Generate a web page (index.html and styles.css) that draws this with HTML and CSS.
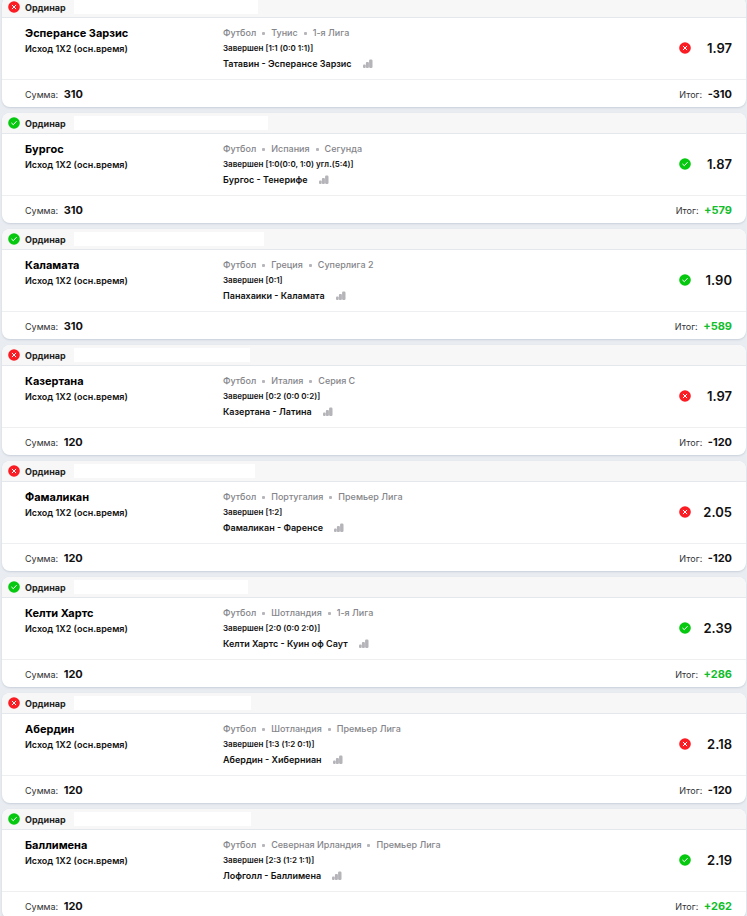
FILE: index.html
```
<!DOCTYPE html>
<html lang="ru">
<head>
  <meta charset="UTF-8">
  <meta name="viewport" content="width=device-width, initial-scale=1.0">
  <title>История ставок</title>
  <link rel="stylesheet" href="styles.css">
</head>
<body>
  <main class="bets" id="bets"></main>

  <script src="bets.js"></script>
</body>
</html>
```

FILE: styles.css
```
* {
  box-sizing: border-box;
}
body {
  font-family: Inter, "Liberation Sans", sans-serif;
  background-color: #e9edf2;
  color: #111;
  margin: 0;
  overflow-x: hidden;
}
/* the list is scrolled a little under the top edge */
.bets {
  display: flex;
  flex-direction: column;
  gap: 6px;
  margin-top: -3px;
  padding: 0 1px 0 2px;
}
.bet {
  background-color: #fff;
  border-radius: 8px;
  overflow: hidden;
  box-shadow: 0 1px 2px #c9d0da;
}
.bet-header {
  display: flex;
  align-items: center;
  height: 21px;
  padding-left: 6px;
  background-color: #f7f7f7;
  border-bottom: 1px solid #e4e7eb;
}
.bet-type {
  width: 49px;
  margin: 0 0 0 5px;
  font-size: 9px;
  font-weight: 700;
  color: #222;
}
.bet-date {
  height: 14px;
  background-color: #fff;
}
.icon {
  display: block;
  width: 12px;
  height: 12px;
}
.icon.lost {
  color: #fb1b22;
}
.icon.won {
  color: #06c90f;
}
.bet-body {
  display: flex;
  height: 62px;
  padding: 7px 14px 0 23px;
  border-bottom: 1px solid #edeff1;
}
.pick {
  width: 198px;
}
.pick h2 {
  margin: 0;
  font-size: 11px;
  line-height: 16px;
  font-weight: 700;
  color: #000;
}
.pick p,
.match p {
  margin: 0;
  font-size: 9px;
  line-height: 15px;
  font-weight: 600;
  white-space: nowrap;
}
.match {
  flex: 1;
}
.match .league {
  display: flex;
  align-items: center;
  gap: 6px;
  line-height: 16px;
  font-weight: 500;
  color: #85858a;
}
.dot {
  width: 3px;
  height: 3px;
  border-radius: 1px;
  background-color: #b5b5ba;
}
.match .status {
  font-size: 8px;
}
.match .teams {
  display: flex;
  align-items: center;
  gap: 11px;
}
.stats {
  padding: 0;
  border: none;
  background: none;
  color: #b4b4b9;
  cursor: pointer;
}
.stats svg {
  display: block;
  width: 10px;
  height: 9px;
}
.odds {
  display: flex;
  align-items: center;
  justify-content: space-between;
  width: 53px;
  height: 46px;
  font-size: 13px;
  font-weight: 600;
}
.bet-footer {
  display: flex;
  justify-content: space-between;
  align-items: center;
  height: 27px;
  padding: 0 14px 0 23px;
  font-size: 9px;
  color: #333;
}
.bet-footer strong {
  margin-left: 3px;
  font-size: 11px;
  font-weight: 700;
  color: #111;
}
.bet-footer .plus {
  color: #12bd2b;
}
```

FILE: bets.js
```
var bets = [
  { won: false, date: 184, pick: "Эсперансе Зарзис", league: ["Футбол", "Тунис", "1-я Лига"], score: "[1:1 (0:0 1:1)]", teams: "Татавин - Эсперансе Зарзис", odds: "1.97", sum: 310, total: "-310" },
  { won: true, date: 194, pick: "Бургос", league: ["Футбол", "Испания", "Сегунда"], score: "[1:0(0:0, 1:0) угл.(5:4)]", teams: "Бургос - Тенерифе", odds: "1.87", sum: 310, total: "+579" },
  { won: true, date: 190, pick: "Каламата", league: ["Футбол", "Греция", "Суперлига 2"], score: "[0:1]", teams: "Панахаики - Каламата", odds: "1.90", sum: 310, total: "+589" },
  { won: false, date: 176, pick: "Казертана", league: ["Футбол", "Италия", "Серия С"], score: "[0:2 (0:0 0:2)]", teams: "Казертана - Латина", odds: "1.97", sum: 120, total: "-120" },
  { won: false, date: 181, pick: "Фамаликан", league: ["Футбол", "Португалия", "Премьер Лига"], score: "[1:2]", teams: "Фамаликан - Фаренсе", odds: "2.05", sum: 120, total: "-120" },
  { won: true, date: 174, pick: "Келти Хартс", league: ["Футбол", "Шотландия", "1-я Лига"], score: "[2:0 (0:0 2:0)]", teams: "Келти Хартс - Куин оф Саут", odds: "2.39", sum: 120, total: "+286" },
  { won: false, date: 177, pick: "Абердин", league: ["Футбол", "Шотландия", "Премьер Лига"], score: "[1:3 (1:2 0:1)]", teams: "Абердин - Хиберниан", odds: "2.18", sum: 120, total: "-120" },
  { won: true, date: 177, pick: "Баллимена", league: ["Футбол", "Северная Ирландия", "Премьер Лига"], score: "[2:3 (1:2 1:1)]", teams: "Лофголл - Баллимена", odds: "2.19", sum: 120, total: "+262" }
];

function statusIcon(won) {
  var mark = won ? "M3.7 6.2L5.3 7.7L8.3 4.5" : "M4.2 4.2L7.8 7.8M7.8 4.2L4.2 7.8";
  return '<svg class="icon ' + (won ? "won" : "lost") + '" viewBox="0 0 12 12">' +
    '<circle cx="6" cy="6" r="5.8" fill="currentColor"/>' +
    '<path d="' + mark + '" fill="none" stroke="#fff" stroke-width="1" stroke-linecap="round"/></svg>';
}

var statsIcon = '<svg viewBox="0 0 10 9" fill="currentColor">' +
  '<rect x="0" y="5.5" width="2.7" height="3.5" rx="1"/>' +
  '<rect x="2.9" y="3" width="3" height="6" rx="1"/>' +
  '<rect x="6.1" y="0.5" width="3.4" height="8.5" rx="1.2"/></svg>';

function renderBet(bet) {
  return '<article class="bet">' +
    '<header class="bet-header">' + statusIcon(bet.won) +
      '<p class="bet-type">Ординар</p>' +
      '<div class="bet-date" style="width:' + bet.date + 'px"></div>' +
    '</header>' +
    '<div class="bet-body">' +
      '<div class="pick"><h2>' + bet.pick + '</h2><p>Исход 1X2 (осн.время)</p></div>' +
      '<div class="match">' +
        '<p class="league"><span>' + bet.league.join('</span><i class="dot"></i><span>') + '</span></p>' +
        '<p class="status">Завершен ' + bet.score + '</p>' +
        '<p class="teams">' + bet.teams + '<button class="stats" type="button" aria-label="Статистика">' + statsIcon + '</button></p>' +
      '</div>' +
      '<div class="odds">' + statusIcon(bet.won) + '<span>' + bet.odds + '</span></div>' +
    '</div>' +
    '<footer class="bet-footer">' +
      '<span>Сумма: <strong>' + bet.sum + '</strong></span>' +
      '<span>Итог: <strong class="' + (bet.won ? "plus" : "minus") + '">' + bet.total + '</strong></span>' +
    '</footer>' +
  '</article>';
}

document.getElementById("bets").innerHTML = bets.map(renderBet).join("");
```
